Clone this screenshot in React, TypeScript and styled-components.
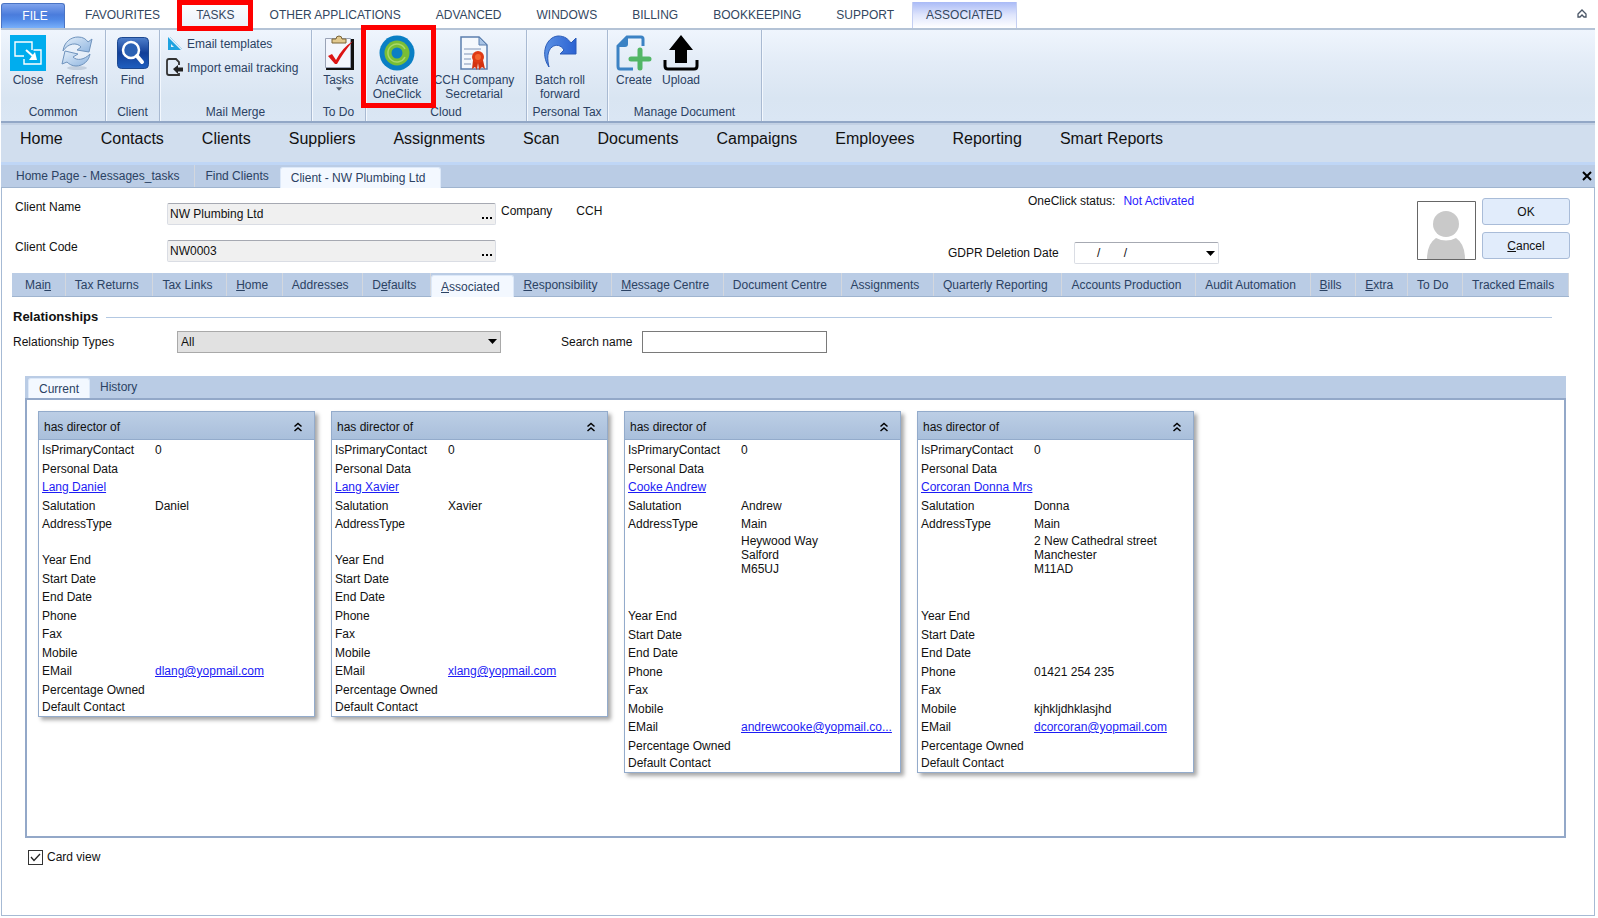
import React, { useState } from "react";
import styled, { createGlobalStyle, css } from "styled-components";

const GlobalStyle = createGlobalStyle`
  *, *::before, *::after { box-sizing: border-box; }
  body {
    margin: 0;
    background: #fff;
    color: #111;
    font: 12px/14px "Liberation Sans", Arial, sans-serif;
  }
  button, input, select { font: inherit; color: inherit; }
  button { border: 0; padding: 0; background: none; cursor: pointer; }
`;

const ink = "#2b4263";
const bar = "#bacce5";
const edge = "#9fb4cf";

const Page = styled.div`
  display: flex;
  flex-direction: column;
  min-height: 100vh;
  padding: 0 3px 2px 1px;
`;

/* Ribbon tabs */
const MenuBar = styled.div`
  display: flex;
  align-items: flex-end;
  height: 30px;
  border-bottom: 2px solid #b4c3d6;
`;

const FileTab = styled.button`
  width: 64px;
  height: 25px;
  margin-right: 3px;
  padding-left: 4px;
  border: 1px solid #4a74c4;
  border-bottom: 0;
  border-radius: 3px 3px 0 0;
  background: linear-gradient(#7fa3ec, #4a7cdc 45%, #5088e6 65%, #79b0fa);
  color: #fff;
`;

const MenuTab = styled.button<{ $look?: "hover" | "active" }>`
  position: relative;
  height: 26px;
  padding: 0 17px;
  color: #33475f;
  border: solid transparent;
  border-width: 0 1px 0 0;
  ${(p) =>
    p.$look === "hover" &&
    css`
      background: linear-gradient(#fdfeff, #eaf1fb);
      border-left-width: 1px;
      border-color: #cdd8e8;
    `}
  ${(p) =>
    p.$look === "active" &&
    css`
      padding: 0 13px;
      background: linear-gradient(#a9baf6, #dfe5fc 50%, #fff);
      border-left-width: 1px;
      border-color: #c4cff2;
    `}
`;

const CollapseButton = styled.button`
  margin: 0 7px 6px auto;
  height: 14px;
`;

const Highlight = styled.span<{ $wide?: boolean }>`
  position: absolute;
  inset: ${(p) => (p.$wide ? "-10px -11px -7px -8px" : "-2px -1px -3px -2px")};
  border: 5px solid #fe0000;
  pointer-events: none;
  z-index: 1;
`;

/* Ribbon */
const Ribbon = styled.div`
  display: flex;
  height: 93px;
  background: linear-gradient(#eff5fd, #e3ecf7 35%, #d9e5f2 75%, #dae6f4);
  border-bottom: 2px solid #92a7c6;
  color: ${ink};
`;

const Group = styled.section<{ $w: number }>`
  display: flex;
  flex-direction: column;
  flex: 0 0 ${(p) => p.$w}px;
  border-right: 1px solid #a9bad2;
  box-shadow: 1px 0 #f3f8fe;
`;

const GroupItems = styled.div<{ $start?: boolean }>`
  display: flex;
  justify-content: ${(p) => (p.$start ? "flex-start" : "center")};
  flex: 1;
  padding: 5px 2px 0;
`;

const GroupName = styled.div`
  text-align: center;
  line-height: 14px;
  padding-bottom: 2px;
`;

const Tool = styled.button<{ $w: number }>`
  position: relative;
  display: flex;
  flex-direction: column;
  align-items: center;
  align-self: flex-start;
  flex: 0 0 ${(p) => p.$w}px;
  line-height: 14px;
  color: ${ink};
  svg { flex: none; margin-bottom: 2px; }
`;

const ToolText = styled.span`
  white-space: pre-line;
`;

const SmallTools = styled.div`
  display: flex;
  flex-direction: column;
  flex: 1;
  gap: 7px;
  padding-left: 4px;
`;

const SmallTool = styled.button`
  display: flex;
  align-items: center;
  gap: 4px;
  height: 17px;
  color: ${ink};
`;

/* Module navigation */
const ModuleNav = styled.nav`
  display: flex;
  gap: 38px;
  height: 42px;
  padding: 5px 19px 0;
  background: #d1deee;
  border-top: 2px solid #c3d1e4;
  border-bottom: 3px solid #bfd6f6;
  a {
    font-size: 16px;
    line-height: 18px;
    color: #111;
    text-decoration: none;
    white-space: nowrap;
  }
`;

/* Tab strips */
const Strip = styled.div<{ $h: number }>`
  display: flex;
  align-items: stretch;
  height: ${(p) => p.$h}px;
  background: ${bar};
  border-bottom: 1px solid ${edge};
`;

const StripTab = styled.button<{ $active?: boolean; $grow?: boolean; $plain?: boolean }>`
  flex: ${(p) => (p.$grow ? "1 1 auto" : "none")};
  padding: 0 9px;
  color: ${ink};
  text-align: left;
  white-space: nowrap;
  border-right: 1px solid ${(p) => (p.$plain ? "transparent" : "#d3d7de")};
  ${(p) =>
    p.$active &&
    css`
      margin-top: 2px;
      margin-bottom: -1px;
      border: 1px solid #dce8f8;
      border-bottom: 0;
      border-radius: 3px 3px 0 0;
      background: #f3f8ff;
    `}
`;

const DocStrip = styled(Strip)`
  ${StripTab} { padding: 0 10px; }
  ${StripTab}:first-child { padding: 0 15px; }
  ${StripTab}:nth-child(3) { padding: 0 15px 0 10px; }
`;

const CloseDoc = styled.button`
  margin: 0 3px 0 auto;
  line-height: 0;
`;

const Frame = styled.main`
  display: flex;
  flex-direction: column;
  flex: 1;
  border: 1px solid #a6bad4;
  border-top: 0;
`;

/* Client header */
const ClientHeader = styled.div`
  display: flex;
  height: 85px;
  padding: 10px 24px 0 13px;
`;

const Labels = styled.div`
  display: flex;
  flex-direction: column;
  gap: 26px;
  padding-top: 2px;
  width: 152px;
`;

const Fields = styled.div`
  display: flex;
  flex-direction: column;
  gap: 15px;
  padding-top: 5px;
  width: 329px;
`;

const Field = styled.div<{ $white?: boolean }>`
  display: flex;
  align-items: center;
  height: 22px;
  min-width: 0;
  flex: ${(p) => (p.$white ? "0 0 145px" : "none")};
  background: ${(p) => (p.$white ? "#fff" : "#f0f0f0")};
  border: 1px solid #dadde4;
  border-top-color: #a6a9b2;
  border-radius: 2px;
  input {
    flex: 1;
    width: 0;
    min-width: 0;
    height: 18px;
    padding: 0 0 0 2px;
    border: 0;
    outline: 0;
    background: transparent;
  }
  button { width: 16px; height: 18px; line-height: 0; }
`;

const Company = styled.div`
  display: flex;
  gap: 24px;
  padding: 6px 0 0 5px;
`;

const Status = styled.div`
  display: flex;
  flex-direction: column;
  gap: 37px;
  margin-left: auto;
  flex: 0 0 271px;
`;

const StatusLine = styled.div`
  display: flex;
  gap: 8px;
  height: 7px;
  padding-left: 80px;
  line-height: 6px;
  white-space: nowrap;
  span { color: #2a1bff; }
`;

const DateLine = styled.div`
  display: flex;
  align-items: center;
  justify-content: space-between;
  white-space: nowrap;
`;

const Avatar = styled.svg`
  flex: none;
  margin: 3px 6px 0 198px;
`;

const Actions = styled.div`
  display: flex;
  flex-direction: column;
  gap: 7px;
`;

const Action = styled.button`
  width: 88px;
  height: 27px;
  border: 1px solid #a9bcd8;
  border-radius: 3px;
  background: #e1ecfb;
`;

/* Relationships */
const SectionStrip = styled(Strip)`
  margin: 0 25px 0 10px;
  ${StripTab}:first-child { padding-left: 13px; }
`;

const Heading = styled.h2`
  display: flex;
  align-items: center;
  gap: 8px;
  margin: 12px 42px 0 11px;
  font-size: 13px;
  line-height: 16px;
  &::after {
    content: "";
    flex: 1;
    height: 1px;
    background: #b3c8e2;
  }
`;

const Filters = styled.div`
  display: flex;
  align-items: center;
  margin: 6px 0 0 11px;
  height: 22px;
`;

const FilterLabel = styled.label<{ $w: number }>`
  width: ${(p) => p.$w}px;
`;

const SelectBox = styled.div`
  position: relative;
  width: 324px;
  margin-right: 60px;
  select {
    appearance: none;
    display: block;
    width: 100%;
    height: 22px;
    padding: 0 3px;
    border: 1px solid #a9a9a9;
    border-radius: 0;
    background: #e1e1e1;
  }
  svg { position: absolute; right: 4px; top: 8px; pointer-events: none; }
`;

const SearchInput = styled.input`
  width: 185px;
  height: 22px;
  border: 1px solid #7a7a7a;
  background: #fff;
`;

const Panel = styled.section`
  display: flex;
  flex-direction: column;
  flex: 1;
  margin: 23px 28px 0 23px;
`;

const PanelStrip = styled(Strip)`
  padding-left: 3px;
  border-bottom: 0;
  ${StripTab} { padding: 0 10px; }
`;

const Cards = styled.div`
  display: flex;
  flex-wrap: wrap;
  align-items: flex-start;
  gap: 16px;
  flex: 1;
  padding: 11px;
  border: 2px solid #93a8c8;
`;

const CardBox = styled.article`
  width: 277px;
  border: 1px solid #93abcb;
  background: #fff;
  box-shadow: 3px 3px 4px rgba(0, 0, 0, 0.35);
`;

const CardHead = styled.header`
  display: flex;
  align-items: center;
  justify-content: space-between;
  height: 28px;
  padding: 2px 11px 0 5px;
  background: linear-gradient(#bccee5, #a9bfdb);
  border-bottom: 1px solid #93abcb;
  button { width: 10px; line-height: 0; }
`;

const Details = styled.dl`
  margin: 0;
  padding: 1px 0 0 3px;
`;

const Row = styled.div<{ $address?: "empty" | "filled" }>`
  display: flex;
  height: 18px;
  line-height: 18px;
  white-space: nowrap;
  &:nth-child(odd) { height: 19px; line-height: 19px; }
  &:last-child { height: 17px; line-height: 17px; }
  ${(p) =>
    p.$address &&
    css`
      && {
        height: ${p.$address === "filled" ? 73 : 17}px;
        line-height: 14px;
        white-space: pre-line;
      }
    `}
  dt { flex: 0 0 113px; }
  dd { margin: 0; }
`;

const Link = styled.a`
  color: #1c1cf5;
  text-decoration: underline;
`;

const CardView = styled.label`
  display: flex;
  align-items: center;
  gap: 4px;
  margin: 12px 0 51px 26px;
  height: 14px;
`;

const Tick = styled.input`
  appearance: none;
  width: 15px;
  height: 15px;
  margin: 0;
  border: 1px solid #333;
  background: #fff;
`;

const TickBox = styled.span`
  position: relative;
  display: flex;
  svg { position: absolute; inset: 0; pointer-events: none; }
`;

/* Icons */
const CloseIcon = () => (
  <svg width="36" height="36" viewBox="0 0 36 36" fill="none">
    <path fill="#00adee" d="M0 0h36v36H0z" />
    <path stroke="#fff" strokeWidth="1.4" d="M14 21H5V7h17v8M23.500 15H31v14H14v-5" />
    <path stroke="#fff" strokeWidth="2" d="m16 15 9 8" />
    <path fill="#fff" d="M27 25h-8l6-8z" />
  </svg>
);

const RefreshIcon = () => (
  <svg width="36" height="36" viewBox="0 0 36 36">
    <defs>
      <linearGradient id="refresh" x1="0" y1="0" x2="1" y2="1">
        <stop offset="0" stopColor="#e4effa" />
        <stop offset="1" stopColor="#8fb5e0" />
      </linearGradient>
    </defs>
    <ellipse cx="18" cy="33" rx="10" ry="2" fill="#c3cfde" />
    <g fill="url(#refresh)" stroke="#6f93bd" strokeWidth="1" strokeLinejoin="round">
      <path d="M4 16C5 7 12 2 19 2c5 0 8 2 10 5l4-3-3 13-12-2 4-3c-4-5-13-4-18 4z" />
      <path d="M31 19c-1 7-7 12-14 12-4 0-7-2-9-4l-5 2 3-13 13 3-5 3c4 4 11 3 17-3z" />
    </g>
  </svg>
);

const FindIcon = () => (
  <svg width="36" height="36" viewBox="0 0 36 36" fill="none">
    <defs>
      <linearGradient id="find" x1="0" y1="0" x2="0" y2="1">
        <stop offset="0" stopColor="#4f80cc" />
        <stop offset="0.5" stopColor="#123f98" />
        <stop offset="1" stopColor="#1f5fc0" />
      </linearGradient>
    </defs>
    <rect x="2.500" y="2.500" width="31" height="31" rx="4" fill="url(#find)" stroke="#1c4890" />
    <circle cx="16" cy="15" r="8" stroke="#fff" strokeWidth="2.500" fill="#2b61b4" />
    <path stroke="#fff" strokeWidth="4" strokeLinecap="round" d="m22 21 5 6" />
  </svg>
);

const TemplateIcon = () => (
  <svg width="17" height="16" viewBox="0 0 17 16">
    <path fill="#1fa3e0" fillRule="evenodd" d="M2 1v13h13zM5 8v3h3z" />
    <path stroke="#a9d6ee" d="M4 1l12 12" />
  </svg>
);

const ImportIcon = () => (
  <svg width="17" height="19" viewBox="0 0 17 19">
    <path
      fill="none"
      stroke="#333"
      strokeWidth="1.800"
      d="M13 7V4l-3-3H3Q1 1 1 3v12q0 2 2 2h10v-2"
    />
    <path fill="#222" d="m7 11 5-4v2.500h5v4h-5V16z" />
  </svg>
);

const TasksIcon = () => (
  <svg width="36" height="36" viewBox="0 0 36 36">
    <path fill="#111" d="M6 4h27v31H5z" />
    <path fill="#f3f6fd" stroke="#9aa3b6" d="M4.500 3.500h25v29h-25z" />
    <path fill="#e2c98e" stroke="#7a6436" d="M11 8V4h4q0-3 3-3t3 3h4v4z" />
    <path fill="#dc1414" d="m7 21 4-2 4 6Q21 13 32 6 22 18 16 29h-2z" />
  </svg>
);

const OneClickIcon = () => (
  <svg width="36" height="36" viewBox="0 0 36 36" fill="none">
    <circle cx="18" cy="18" r="17.500" fill="#0a7fc4" />
    <circle cx="18" cy="18" r="12.500" fill="#79be35" />
    <path stroke="#a9d86a" strokeWidth="1.500" d="M26 14a9 9 0 1 0 0 8" />
    <circle cx="18" cy="18" r="5.500" fill="#0a7fc4" />
  </svg>
);

const SecretarialIcon = () => (
  <svg width="36" height="36" viewBox="0 0 36 36">
    <path fill="#f4f8fd" stroke="#5b7fae" strokeWidth="1.500" d="M5 2h18l8 8v24H5z" />
    <path fill="#a9c4e5" stroke="#5b7fae" d="M23 2v8h8z" />
    <path stroke="#b9c6da" strokeWidth="2" d="M8 14h17M8 19h9M8 24h7M8 29h7" />
    <path fill="#d43210" d="m17 25-1 9 3-2 2 3 1-7 1 7 3-3 3 2-2-9z" />
    <circle cx="22" cy="22" r="6" fill="#df3a14" />
    <circle cx="22" cy="22" r="3" fill="#f4642e" />
  </svg>
);

const RollIcon = () => (
  <svg width="36" height="36" viewBox="0 0 36 36">
    <defs>
      <linearGradient id="roll" x1="0" y1="0" x2="1" y2="0">
        <stop offset="0" stopColor="#5a90e4" />
        <stop offset="1" stopColor="#2b62d2" />
      </linearGradient>
    </defs>
    <path
      fill="url(#roll)"
      stroke="#2a5bb8"
      d="M7 32C-2 19 4 2 16 1c7 0 10 3 13 7l5-5v16H18l4-4c-3-5-8-6-12-3-5 4-5 12-3 20z"
    />
  </svg>
);

const CreateIcon = () => (
  <svg width="36" height="36" viewBox="0 0 36 36" fill="none">
    <path
      stroke="#3b82c4"
      strokeWidth="3"
      d="M27 11V4q0-2-2-2H11L2 11v20q0 3 2 3h13"
    />
    <path fill="#3b82c4" d="M1 12 12 1v8q0 3-3 3z" />
    <path stroke="#52b666" strokeWidth="5" strokeLinecap="round" d="M24 15v18M15 24h18" />
  </svg>
);

const UploadIcon = () => (
  <svg width="36" height="36" viewBox="0 0 36 36">
    <path fill="#000" d="m18 0 12 15h-6v13H12V15H6z" />
    <path fill="none" stroke="#000" strokeWidth="3" d="M2 25v6q0 3 3 3h26q3 0 3-3v-6" />
  </svg>
);

const Caret = ({ small }: { small?: boolean }) => (
  <svg width={small ? 6 : 9} height={small ? 4 : 5} viewBox="0 0 9 5">
    <path fill={small ? "#55606f" : "#000"} d="M0 0h9L4.500 5z" />
  </svg>
);

const Dots = () => (
  <svg width="10" height="14" viewBox="0 0 10 14">
    <path fill="#000" d="M0 10h2v2H0zM4 10h2v2H4zM8 10h2v2H8z" />
  </svg>
);

const Chevrons = () => (
  <svg width="10" height="10" viewBox="0 0 10 10" fill="none" stroke="#000" strokeWidth="1.500">
    <path d="m1.500 4.500 3.500-3 3.500 3M1.500 9l3.500-3 3.500 3" />
  </svg>
);

/* Data */
const menuTabs: { name: string; look?: "hover" | "active" }[] = [
  { name: "FAVOURITES" },
  { name: "TASKS", look: "hover" },
  { name: "OTHER APPLICATIONS" },
  { name: "ADVANCED" },
  { name: "WINDOWS" },
  { name: "BILLING" },
  { name: "BOOKKEEPING" },
  { name: "SUPPORT" },
  { name: "ASSOCIATED", look: "active" },
];

const modules = [
  "Home", "Contacts", "Clients", "Suppliers", "Assignments", "Scan",
  "Documents", "Campaigns", "Employees", "Reporting", "Smart Reports",
];

/* An underscore stands before the access key of each tab. */
const sections = [
  "Mai_n", "Tax Returns", "Tax Links", "_Home", "Addresses", "D_efaults",
  "_Associated", "_Responsibility", "_Message Centre", "Document Centre",
  "Assignments", "Quarterly Reporting", "Accounts Production",
  "Audit Automation", "_Bills", "_Extra", "To Do", "Tracked Emails",
];

const AccessText = ({ text }: { text: string }) => {
  const [before, after] = text.split("_");
  if (after === undefined) return <>{before}</>;
  return (
    <>
      {before}
      <u>{after[0]}</u>
      {after.slice(1)}
    </>
  );
};

type Contact = {
  name: string;
  salutation: string;
  email: string;
  addressType?: string;
  address?: string;
  phone?: string;
  mobile?: string;
};

const contacts: Contact[] = [
  { name: "Lang Daniel", salutation: "Daniel", email: "dlang@yopmail.com" },
  { name: "Lang Xavier", salutation: "Xavier", email: "xlang@yopmail.com" },
  {
    name: "Cooke Andrew",
    salutation: "Andrew",
    email: "andrewcooke@yopmail.co...",
    addressType: "Main",
    address: "Heywood Way\nSalford\nM65UJ",
  },
  {
    name: "Corcoran Donna Mrs",
    salutation: "Donna",
    email: "dcorcoran@yopmail.com",
    addressType: "Main",
    address: "2 New Cathedral street\nManchester\nM11AD",
    phone: "01421 254 235",
    mobile: "kjhkljdhklasjhd",
  },
];

const Detail = ({ label, children }: { label: React.ReactNode; children?: React.ReactNode }) => (
  <Row>
    <dt>{label}</dt>
    <dd>{children}</dd>
  </Row>
);

const ContactCard = ({ contact }: { contact: Contact }) => (
  <CardBox>
    <CardHead>
      has director of
      <button aria-label="Collapse card">
        <Chevrons />
      </button>
    </CardHead>
    <Details>
      <Detail label="IsPrimaryContact">0</Detail>
      <Detail label="Personal Data" />
      <Detail label={<Link href="#contact">{contact.name}</Link>} />
      <Detail label="Salutation">{contact.salutation}</Detail>
      <Detail label="AddressType">{contact.addressType}</Detail>
      <Row $address={contact.address ? "filled" : "empty"}>
        <dt />
        <dd>{contact.address}</dd>
      </Row>
      <Detail label="Year End" />
      <Detail label="Start Date" />
      <Detail label="End Date" />
      <Detail label="Phone">{contact.phone}</Detail>
      <Detail label="Fax" />
      <Detail label="Mobile">{contact.mobile}</Detail>
      <Detail label="EMail">
        <Link href="#email">{contact.email}</Link>
      </Detail>
      <Detail label="Percentage Owned" />
      <Detail label="Default Contact" />
    </Details>
  </CardBox>
);

const emptyDate = `${"\u00a0".repeat(6)}/${"\u00a0".repeat(7)}/`;

export default function App() {
  const [cardView, setCardView] = useState(true);
  return (
    <Page>
      <GlobalStyle />
      <MenuBar>
        <FileTab>FILE</FileTab>
        {menuTabs.map((t) => (
          <MenuTab key={t.name} $look={t.look}>
            {t.name}
            {t.name === "TASKS" && <Highlight />}
          </MenuTab>
        ))}
        <CollapseButton aria-label="Collapse ribbon">
          <svg width="12" height="12" viewBox="0 0 12 12" fill="none" stroke="#4a5666" strokeWidth="1.300">
            <path d="m2 6 4-4 4 4v3H8L6 7 4 9H2z" />
          </svg>
        </CollapseButton>
      </MenuBar>

      <Ribbon>
        <Group $w={105}>
          <GroupItems $start>
            <Tool $w={50}><CloseIcon /><ToolText>Close</ToolText></Tool>
            <Tool $w={48}><RefreshIcon /><ToolText>Refresh</ToolText></Tool>
          </GroupItems>
          <GroupName>Common</GroupName>
        </Group>
        <Group $w={54}>
          <GroupItems>
            <Tool $w={48}><FindIcon /><ToolText>Find</ToolText></Tool>
          </GroupItems>
          <GroupName>Client</GroupName>
        </Group>
        <Group $w={152}>
          <GroupItems>
            <SmallTools>
              <SmallTool><TemplateIcon />Email templates</SmallTool>
              <SmallTool><ImportIcon />Import email tracking</SmallTool>
            </SmallTools>
          </GroupItems>
          <GroupName>Mail Merge</GroupName>
        </Group>
        <Group $w={54}>
          <GroupItems>
            <Tool $w={48}>
              <TasksIcon />
              <ToolText>Tasks</ToolText>
              <Caret small />
            </Tool>
          </GroupItems>
          <GroupName>To Do</GroupName>
        </Group>
        <Group $w={161}>
          <GroupItems>
            <Tool $w={56}>
              <OneClickIcon />
              <ToolText>{"Activate\nOneClick"}</ToolText>
              <Highlight $wide />
            </Tool>
            <Tool $w={98}>
              <SecretarialIcon />
              <ToolText>{"CCH Company\nSecretarial"}</ToolText>
            </Tool>
          </GroupItems>
          <GroupName>Cloud</GroupName>
        </Group>
        <Group $w={81}>
          <GroupItems $start>
            <Tool $w={62}><RollIcon /><ToolText>{"Batch roll\nforward"}</ToolText></Tool>
          </GroupItems>
          <GroupName>Personal Tax</GroupName>
        </Group>
        <Group $w={154}>
          <GroupItems $start>
            <Tool $w={48}><CreateIcon /><ToolText>Create</ToolText></Tool>
            <Tool $w={46}><UploadIcon /><ToolText>Upload</ToolText></Tool>
          </GroupItems>
          <GroupName>Manage Document</GroupName>
        </Group>
      </Ribbon>

      <ModuleNav>
        {modules.map((m) => (
          <a key={m} href="#module">{m}</a>
        ))}
      </ModuleNav>

      <DocStrip $h={23}>
        <StripTab>Home Page - Messages_tasks</StripTab>
        <StripTab $plain>Find Clients</StripTab>
        <StripTab $active>Client - NW Plumbing Ltd</StripTab>
        <CloseDoc aria-label="Close tab">
          <svg width="10" height="10" viewBox="0 0 10 10" stroke="#000" strokeWidth="2">
            <path d="m1 1 8 8M9 1 1 9" />
          </svg>
        </CloseDoc>
      </DocStrip>

      <Frame>
        <ClientHeader>
          <Labels>
            <label htmlFor="client-name">Client Name</label>
            <label htmlFor="client-code">Client Code</label>
          </Labels>
          <Fields>
            <Field>
              <input id="client-name" defaultValue="NW Plumbing Ltd" />
              <button aria-label="Choose client name"><Dots /></button>
            </Field>
            <Field>
              <input id="client-code" defaultValue="NW0003" />
              <button aria-label="Choose client code"><Dots /></button>
            </Field>
          </Fields>
          <Company>
            <span>Company</span>
            <span>CCH</span>
          </Company>
          <Status>
            <StatusLine>OneClick status: <span>Not Activated</span></StatusLine>
            <DateLine>
              <label htmlFor="gdpr-date">GDPR Deletion Date</label>
              <Field $white>
                <input id="gdpr-date" defaultValue={emptyDate} />
                <button aria-label="Open calendar"><Caret /></button>
              </Field>
            </DateLine>
          </Status>
          <Avatar width="59" height="59" viewBox="0 0 59 59" role="img" aria-label="Client photo">
            <path fill="#fff" stroke="#666" d="M.5.5h58v58H.5z" />
            <circle cx="29" cy="23" r="13" fill="#c9c9c9" />
            <path fill="#c9c9c9" d="M10 58q0-15 9-21 10 5 20 0 9 6 9 21z" />
          </Avatar>
          <Actions>
            <Action>OK</Action>
            <Action><u>C</u>ancel</Action>
          </Actions>
        </ClientHeader>

        <SectionStrip $h={24}>
          {sections.map((s) => (
            <StripTab key={s} $grow $active={s === "_Associated"}>
              <AccessText text={s} />
            </StripTab>
          ))}
        </SectionStrip>

        <Heading>Relationships</Heading>
        <Filters>
          <FilterLabel $w={164} htmlFor="relationship-types">Relationship Types</FilterLabel>
          <SelectBox>
            <select id="relationship-types">
              <option>All</option>
            </select>
            <Caret />
          </SelectBox>
          <FilterLabel $w={81} htmlFor="search-name">Search name</FilterLabel>
          <SearchInput id="search-name" type="text" />
        </Filters>

        <Panel>
          <PanelStrip $h={22}>
            <StripTab $active>Current</StripTab>
            <StripTab $plain>History</StripTab>
          </PanelStrip>
          <Cards>
            {contacts.map((c) => (
              <ContactCard key={c.name} contact={c} />
            ))}
          </Cards>
        </Panel>

        <CardView>
          <TickBox>
            <Tick type="checkbox" checked={cardView} onChange={(e) => setCardView(e.target.checked)} />
            {cardView && (
              <svg width="15" height="15" viewBox="0 0 15 15" fill="none" stroke="#222" strokeWidth="1.300">
                <path d="m3 7 3 3.500L12 4" />
              </svg>
            )}
          </TickBox>
          Card view
        </CardView>
      </Frame>
    </Page>
  );
}
